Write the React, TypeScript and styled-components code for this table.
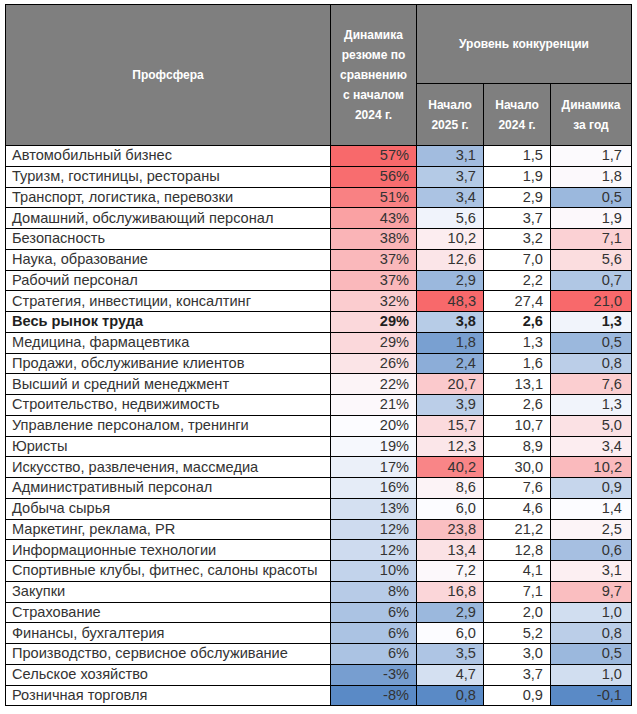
import React from "react";
import styled, { createGlobalStyle } from "styled-components";

const GlobalStyle = createGlobalStyle`
  html, body {
    margin: 0;
    padding: 0;
    background: #ffffff;
  }
  body {
    font-family: "Liberation Sans", Arial, sans-serif;
  }
`;

type Row = {
  name: string;
  resume: number;
  c2025: number;
  c2024: number;
  diff: number;
  total?: boolean;
};

const rows: Row[] = [
  { name: "Автомобильный бизнес", resume: 57, c2025: 3.1, c2024: 1.5, diff: 1.7 },
  { name: "Туризм, гостиницы, рестораны", resume: 56, c2025: 3.7, c2024: 1.9, diff: 1.8 },
  { name: "Транспорт, логистика, перевозки", resume: 51, c2025: 3.4, c2024: 2.9, diff: 0.5 },
  { name: "Домашний, обслуживающий персонал", resume: 43, c2025: 5.6, c2024: 3.7, diff: 1.9 },
  { name: "Безопасность", resume: 38, c2025: 10.2, c2024: 3.2, diff: 7.1 },
  { name: "Наука, образование", resume: 37, c2025: 12.6, c2024: 7.0, diff: 5.6 },
  { name: "Рабочий персонал", resume: 37, c2025: 2.9, c2024: 2.2, diff: 0.7 },
  { name: "Стратегия, инвестиции, консалтинг", resume: 32, c2025: 48.3, c2024: 27.4, diff: 21.0 },
  { name: "Весь рынок труда", resume: 29, c2025: 3.8, c2024: 2.6, diff: 1.3, total: true },
  { name: "Медицина, фармацевтика", resume: 29, c2025: 1.8, c2024: 1.3, diff: 0.5 },
  { name: "Продажи, обслуживание клиентов", resume: 26, c2025: 2.4, c2024: 1.6, diff: 0.8 },
  { name: "Высший и средний менеджмент", resume: 22, c2025: 20.7, c2024: 13.1, diff: 7.6 },
  { name: "Строительство, недвижимость", resume: 21, c2025: 3.9, c2024: 2.6, diff: 1.3 },
  { name: "Управление персоналом, тренинги", resume: 20, c2025: 15.7, c2024: 10.7, diff: 5.0 },
  { name: "Юристы", resume: 19, c2025: 12.3, c2024: 8.9, diff: 3.4 },
  { name: "Искусство, развлечения, массмедиа", resume: 17, c2025: 40.2, c2024: 30.0, diff: 10.2 },
  { name: "Административный персонал", resume: 16, c2025: 8.6, c2024: 7.6, diff: 0.9 },
  { name: "Добыча сырья", resume: 13, c2025: 6.0, c2024: 4.6, diff: 1.4 },
  { name: "Маркетинг, реклама, PR", resume: 12, c2025: 23.8, c2024: 21.2, diff: 2.5 },
  { name: "Информационные технологии", resume: 12, c2025: 13.4, c2024: 12.8, diff: 0.6 },
  { name: "Спортивные клубы, фитнес, салоны красоты", resume: 10, c2025: 7.2, c2024: 4.1, diff: 3.1 },
  { name: "Закупки", resume: 8, c2025: 16.8, c2024: 7.1, diff: 9.7 },
  { name: "Страхование", resume: 6, c2025: 2.9, c2024: 2.0, diff: 1.0 },
  { name: "Финансы, бухгалтерия", resume: 6, c2025: 6.0, c2024: 5.2, diff: 0.8 },
  { name: "Производство, сервисное обслуживание", resume: 6, c2025: 3.5, c2024: 3.0, diff: 0.5 },
  { name: "Сельское хозяйство", resume: -3, c2025: 4.7, c2024: 3.7, diff: 1.0 },
  { name: "Розничная торговля", resume: -8, c2025: 0.8, c2024: 0.9, diff: -0.1 },
];

// Three-colour scale: blue (min) → near-white (median) → red (max)
const LOW = [90, 138, 198];
const MID = [252, 252, 255];
const HIGH = [248, 105, 107];

function mix(a: number[], b: number[], t: number) {
  const c = a.map((v, i) => Math.round(v + (b[i] - v) * t));
  return `rgb(${c[0]}, ${c[1]}, ${c[2]})`;
}

function makeScale(values: number[]) {
  const sorted = [...values].sort((a, b) => a - b);
  const min = sorted[0];
  const max = sorted[sorted.length - 1];
  const n = sorted.length;
  const median =
    n % 2 ? sorted[(n - 1) / 2] : (sorted[n / 2 - 1] + sorted[n / 2]) / 2;
  return (v: number) => {
    if (v >= median) {
      const t = max === median ? 0 : (v - median) / (max - median);
      return mix(MID, HIGH, t);
    }
    const t = median === min ? 0 : (median - v) / (median - min);
    return mix(MID, LOW, t);
  };
}

const resumeScale = makeScale(rows.map((r) => r.resume));
const c2025Scale = makeScale(rows.map((r) => r.c2025));
const diffScale = makeScale(rows.map((r) => r.diff));

const fmt = (v: number) => v.toFixed(1).replace(".", ",");

const Page = styled.div`
  padding: 4px 0 0 5px;
`;

const Table = styled.table`
  border-collapse: collapse;
  table-layout: fixed;
  width: 627px;
  font-family: "Liberation Sans", Arial, sans-serif;
  color: #333333;
`;

const HeadCell = styled.th`
  background: #7f7f7f;
  color: #ffffff;
  border: 1px solid #000000;
  font-size: 12px;
  font-weight: 700;
  line-height: 20px;
  text-align: center;
  vertical-align: middle;
  padding: 0 2px;
`;

const HeadRow = styled.tr<{ $h: number }>`
  height: ${(p) => p.$h}px;
`;

const BodyRow = styled.tr`
  height: 20.75px;
`;

const NameCell = styled.td<{ $bold?: boolean }>`
  border: 1px solid #000000;
  background: #ffffff;
  font-size: 14.6px;
  font-weight: ${(p) => (p.$bold ? 700 : 400)};
  color: ${(p) => (p.$bold ? "#1f1f1f" : "#333333")};
  line-height: 18px;
  padding: 0 0 1px 6px;
  white-space: nowrap;
  overflow: hidden;
  text-align: left;
  vertical-align: middle;
`;

const NumCell = styled.td<{ $bold?: boolean; $bg?: string; $pr?: number }>`
  border: 1px solid #000000;
  background: ${(p) => p.$bg ?? "#ffffff"};
  font-size: 14.6px;
  font-weight: ${(p) => (p.$bold ? 700 : 400)};
  color: ${(p) => (p.$bold ? "#1f1f1f" : "#333333")};
  line-height: 18px;
  padding: 0 ${(p) => p.$pr ?? 7}px 1px 0;
  white-space: nowrap;
  text-align: right;
  vertical-align: middle;
`;

export default function App() {
  return (
    <>
      <GlobalStyle />
      <Page>
        <Table>
          <colgroup>
            <col style={{ width: 325 }} />
            <col style={{ width: 86 }} />
            <col style={{ width: 67 }} />
            <col style={{ width: 67 }} />
            <col style={{ width: 81 }} />
          </colgroup>
          <thead>
            <HeadRow $h={79}>
              <HeadCell rowSpan={2}>Профсфера</HeadCell>
              <HeadCell rowSpan={2}>
                Динамика
                <br />
                резюме по
                <br />
                сравнению
                <br />с началом
                <br />
                2024 г.
              </HeadCell>
              <HeadCell colSpan={3}>Уровень конкуренции</HeadCell>
            </HeadRow>
            <HeadRow $h={62}>
              <HeadCell>
                Начало
                <br />
                2025 г.
              </HeadCell>
              <HeadCell>
                Начало
                <br />
                2024 г.
              </HeadCell>
              <HeadCell>
                Динамика
                <br />
                за год
              </HeadCell>
            </HeadRow>
          </thead>
          <tbody>
            {rows.map((r) => (
              <BodyRow key={r.name}>
                <NameCell $bold={r.total}>{r.name}</NameCell>
                <NumCell $bold={r.total} $bg={resumeScale(r.resume)}>
                  {r.resume}%
                </NumCell>
                <NumCell $bold={r.total} $bg={c2025Scale(r.c2025)}>
                  {fmt(r.c2025)}
                </NumCell>
                <NumCell $bold={r.total}>{fmt(r.c2024)}</NumCell>
                <NumCell $bold={r.total} $bg={diffScale(r.diff)} $pr={9}>
                  {fmt(r.diff)}
                </NumCell>
              </BodyRow>
            ))}
          </tbody>
        </Table>
      </Page>
    </>
  );
}
